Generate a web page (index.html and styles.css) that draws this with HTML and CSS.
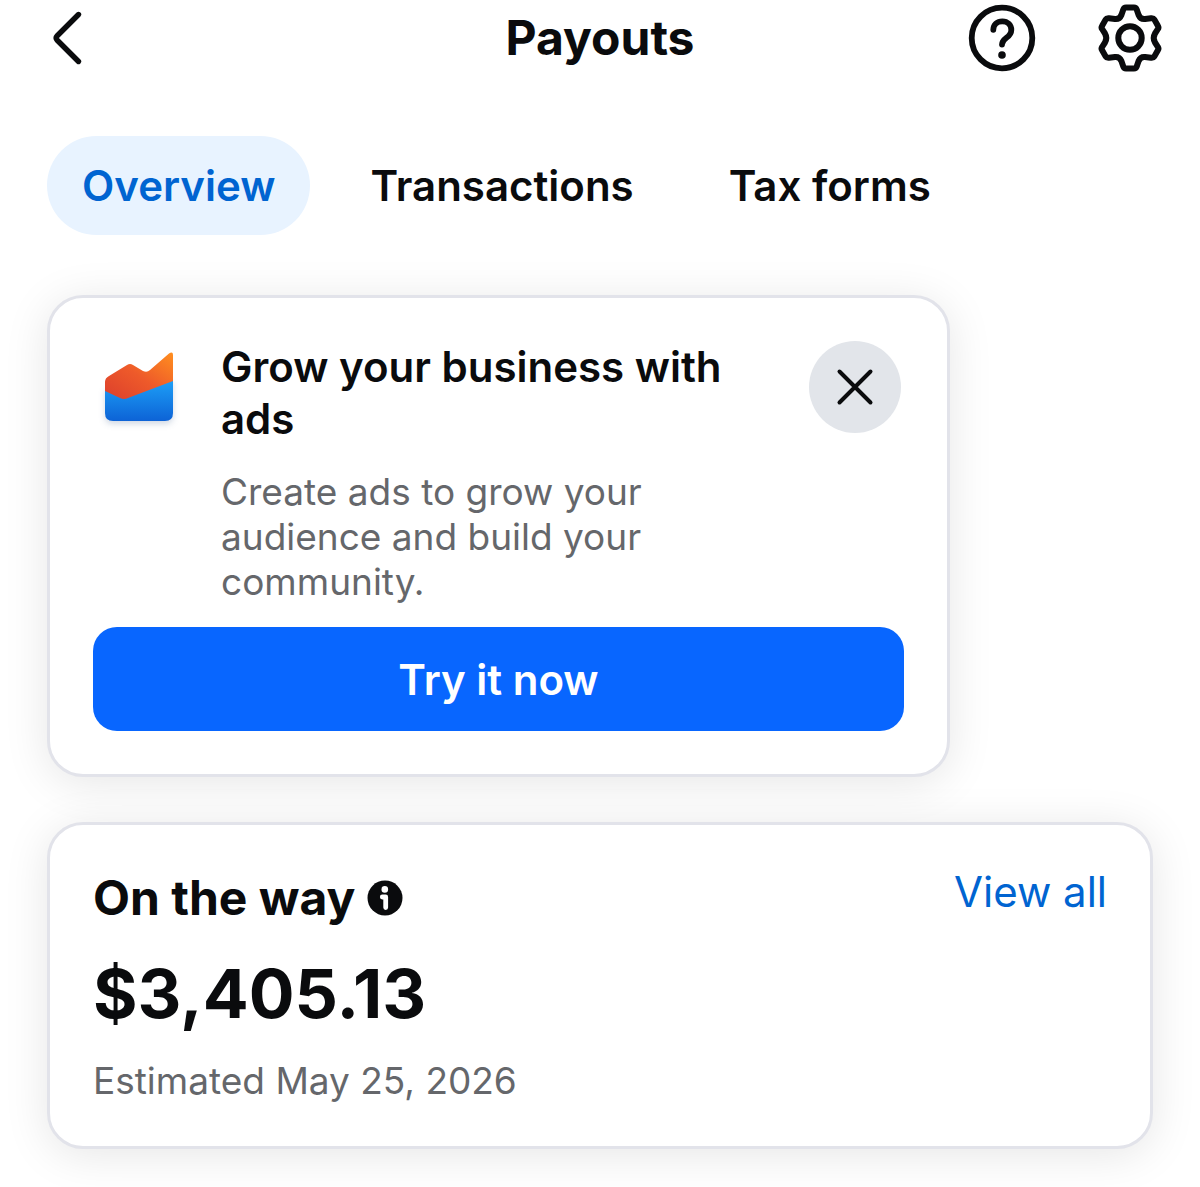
FILE: index.html
```html
<!DOCTYPE html>
<html lang="en">
<head>
<meta charset="utf-8">
<meta name="viewport" content="width=device-width, initial-scale=1">
<title>Payouts</title>
<link rel="stylesheet" href="styles.css">
</head>
<body>
<header class="topbar">
  <button class="icon-button back" type="button" aria-label="Back">
    <svg width="36" height="56" viewBox="0 0 36 56" fill="none" stroke="currentColor" stroke-width="5.400" stroke-linecap="round" stroke-linejoin="round"><path d="M30.500 4.500 9 26Q7.300 28 9 30L30.500 51.500"/></svg>
  </button>
  <h1 class="title">Payouts</h1>
  <div class="actions">
    <button class="icon-button" type="button" aria-label="Help">
      <svg width="68" height="68" viewBox="0 0 68 68" fill="none" stroke="currentColor" stroke-width="5.800" stroke-linecap="round" stroke-linejoin="round"><circle cx="34" cy="34" r="30.300"/><path d="M25.300 25.800C25.300 20.500 29.200 17.300 34.300 17.300C39.800 17.300 43.300 21.200 43.300 25.900C43.300 34 34 33.500 34 40.600"/><circle cx="34" cy="51" r="3.800" fill="currentColor" stroke="none"/></svg>
    </button>
    <button class="icon-button" type="button" aria-label="Settings">
      <svg width="68" height="68" viewBox="0 0 68 68" fill="none" stroke="currentColor" stroke-width="6" stroke-linejoin="round"><path d="M30 3.600H38Q40 3.600 40.700 5.600L42.600 11Q44.500 15.500 49 15L55 14.300Q57.400 14 58.400 15.600L62 22Q63 23.600 61.800 25.200L59 29.500Q56.400 34 59 38.500L61.800 42.800Q63 44.400 62 46L58.400 52.400Q57.400 54 55 53.700L49 53Q44.500 52.500 42.600 57L40.700 62.400Q40 64.400 38 64.400H30Q28 64.400 27.300 62.400L25.400 57Q23.500 52.500 19 53L13 53.700Q10.600 54 9.600 52.400L6 46Q5 44.400 6.200 42.800L9 38.500Q11.600 34 9 29.500L6.200 25.200Q5 23.600 6 22L9.600 15.600Q10.600 14 13 14.300L19 15Q23.500 15.500 25.400 11L27.300 5.600Q28 3.600 30 3.600Z"/><circle cx="34" cy="34" r="11.700"/></svg>
    </button>
  </div>
</header>
<nav class="tabs" aria-label="Payouts sections">
  <a class="tab tab-active" href="#overview" aria-current="page">Overview</a>
  <a class="tab" href="#transactions">Transactions</a>
  <a class="tab" href="#tax-forms">Tax forms</a>
</nav>
<main class="content" id="overview">
  <section class="card promo">
    <div class="promo-head">
      <svg class="promo-icon" width="92" height="92" viewBox="0 0 92 92" aria-hidden="true">
        <defs>
          <linearGradient id="warm" x1="0" y1="1" x2="1" y2="0"><stop offset="0" stop-color="#dc3f2c"/><stop offset=".5" stop-color="#ee5a2a"/><stop offset="1" stop-color="#ff8f1f"/></linearGradient>
          <linearGradient id="cool" x1="0" y1="0" x2="0" y2="1"><stop offset="0" stop-color="#1da1f8"/><stop offset="1" stop-color="#0d63d6"/></linearGradient>
        </defs>
        <path class="promo-chart" fill="url(#cool)" d="M12 46L30 50L80 38V72Q80 80 72 80H20Q12 80 12 72Z"/>
        <path fill="url(#warm)" d="M12 41Q12 37 16 35L34 24Q37 22 40 24L50 30Q54 32 57 29L76 12.500Q80 10 80 14V40L35 57Q31 59 27 57L12 50Z"/>
      </svg>
      <div class="promo-text">
        <h2 class="promo-title">Grow your business with ads</h2>
        <p class="muted promo-copy">Create ads to grow your audience and build your community.</p>
      </div>
      <button class="close" type="button" aria-label="Dismiss">
        <svg width="40" height="40" viewBox="0 0 40 40" fill="none" stroke="currentColor" stroke-width="4" stroke-linecap="round"><path d="M4.500 4.500 35.500 35.500M35.500 4.500 4.500 35.500"/></svg>
      </button>
    </div>
    <button class="primary" type="button">Try it now</button>
  </section>
  <section class="card payout">
    <div class="payout-head">
      <h2 class="payout-title">On the way
        <svg class="info" width="36" height="36" viewBox="0 0 36 36" role="img" aria-label="Information"><circle cx="18" cy="18" r="17.500" fill="#0a0b0d"/><circle cx="17.800" cy="9.400" r="3.300" fill="#fff"/><path d="M15.300 17H18.700V27.500" fill="none" stroke="#fff" stroke-width="4.800" stroke-linecap="round" stroke-linejoin="round"/></svg>
      </h2>
      <a class="view-all" href="#payouts">View all</a>
    </div>
    <p class="amount">$3,405.13</p>
    <p class="muted">Estimated May 25, 2026</p>
  </section>
</main>
</body>
</html>
```

FILE: styles.css
```css
* {
  box-sizing: border-box;
}

body {
  margin: 0;
  background: #fff;
  color: #0a0b0d;
  font-family: Inter, "Liberation Sans", sans-serif;
}

h1,
h2,
p {
  margin: 0;
}

button {
  border: 0;
  padding: 0;
  color: inherit;
  font: inherit;
  cursor: pointer;
}

a {
  text-decoration: none;
}

svg {
  display: block;
}

.topbar {
  display: grid;
  grid-template-columns: 1fr auto 1fr;
  align-items: center;
  height: 76px;
  padding: 0 36px 0 48px;
}

.icon-button {
  background: none;
}

.back {
  justify-self: start;
}

.title {
  margin-right: 12px;
  font-size: 48px;
  font-weight: 700;
  line-height: 60px;
}

.actions {
  display: flex;
  justify-content: flex-end;
  gap: 60px;
}

.tabs {
  display: flex;
  gap: 25px;
  padding: 60px 47px;
}

.tab {
  padding: 24px 35px;
  border-radius: 50px;
  color: inherit;
  font-size: 42px;
  font-weight: 600;
  line-height: 51px;
}

.tab-active {
  background: #e8f3ff;
  color: #0064d1;
}

.content {
  display: flex;
  flex-direction: column;
  gap: 45px;
  padding: 0 47px 40px;
}

.card {
  border: 3px solid #e2e3ea;
  border-radius: 36px;
  background: #fff;
  box-shadow: 0 6px 45px rgba(0, 0, 0, 0.1);
  padding: 43px;
}

.promo {
  width: 100%;
  max-width: 903px;
}

.promo-head {
  display: flex;
  align-items: flex-start;
  gap: 36px;
  margin-bottom: 23px;
}

.promo-icon {
  flex: none;
}

.promo-chart {
  filter: drop-shadow(0 3px 3px rgba(20, 60, 120, 0.2));
}

.promo-text {
  flex: 1;
}

.promo-title {
  margin-bottom: 24px;
  font-size: 42px;
  font-weight: 600;
  line-height: 52px;
}

.muted {
  color: #65676b;
  font-size: 37px;
  line-height: 45px;
}

.close {
  display: grid;
  flex: none;
  place-items: center;
  width: 92px;
  height: 92px;
  margin-right: 3px;
  border-radius: 50%;
  background: #e2e5ea;
}

.primary {
  width: 100%;
  height: 104px;
  border-radius: 24px;
  background: #0866ff;
  color: #fff;
  font-size: 42px;
  font-weight: 600;
}

.payout-head {
  display: flex;
  align-items: flex-start;
  justify-content: space-between;
}

.payout-title {
  display: flex;
  align-items: center;
  gap: 12px;
  font-size: 48px;
  font-weight: 700;
  line-height: 60px;
}

.view-all {
  color: #0064d1;
  font-size: 42px;
  line-height: 48px;
}

.amount {
  margin: 20px 0;
  font-size: 68px;
  font-weight: 700;
  line-height: 90px;
}
```
